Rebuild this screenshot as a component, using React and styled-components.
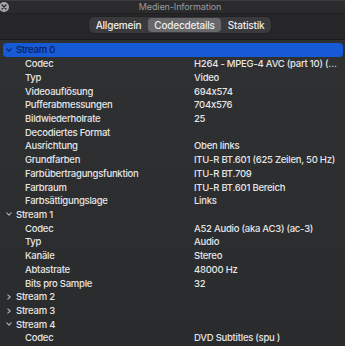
import styled, { createGlobalStyle } from 'styled-components';

const GlobalStyle = createGlobalStyle`
  html, body {
    margin: 0;
    padding: 0;
    background: #2d2e30;
  }
  body {
    font-family: Inter, "Noto Sans", sans-serif;
    font-feature-settings: "calt" 0;
    -webkit-font-smoothing: antialiased;
  }
`;

const Window = styled.div`
  width: 345px;
  height: 346px;
  overflow: hidden;
  background: linear-gradient(#303133, #2a2b2d);
  color: #e6e6e6;
`;

const TitleBar = styled.div`
  display: grid;
  grid-template-columns: 15px 1fr;
  align-items: center;
  height: 13px;
  background: #2b2b2d;
  border-top: 1px solid #3c3c3e;
  box-sizing: border-box;
`;

const CloseButton = styled.div`
  width: 10px;
  height: 10px;
  margin-left: -1px;
  border-radius: 50%;
  background: #a8a8aa;
  display: flex;
  align-items: center;
  justify-content: center;
`;

const Title = styled.div`
  text-align: center;
  font-size: 9px;
  letter-spacing: -0.1px;
  line-height: 12px;
  color: #9d9d9f;
`;

const Toolbar = styled.div`
  display: flex;
  justify-content: center;
  padding: 3px 0 6px 15px;
  background: #262628;
  border-top: 1px solid #1f1f21;
  border-bottom: 1px solid #1a1a1b;
`;

const Segmented = styled.div`
  display: flex;
  gap: 1px;
  padding: 1px;
  background: #3a3a3c;
  box-shadow: 0 0 0 0.5px #1f1f21;
  border-radius: 5px;
`;

const Segment = styled.div`
  padding: 1px 6px;
  font-size: 10px;
  line-height: 12px;
  letter-spacing: -0.2px;
  font-weight: 500;
  color: #ececec;
  border-radius: 4px;
  background: ${(p) => (p.$active ? '#68686a' : 'transparent')};
`;

const List = styled.div`
  display: flex;
  flex-direction: column;
  padding: 3px 0 0 3px;
`;

const Row = styled.div`
  display: grid;
  grid-template-columns: 191px 1fr;
  align-items: center;
  height: 13.72px;
  font-size: 9.5px;
  font-weight: 500;
  letter-spacing: -0.25px;
  white-space: nowrap;
  border-radius: 4px;
  background: ${(p) => (p.$selected ? '#165ad6' : 'transparent')};
  color: ${(p) => (p.$selected ? '#0c1d5a' : '#e6e6e6')};
  margin-right: ${(p) => (p.$selected ? '2px' : '0')};
`;

const Label = styled.div`
  display: flex;
  align-items: center;
  padding-left: ${(p) => (p.$child ? '22px' : '3px')};
  gap: 4px;
`;

const Value = styled.div`
  overflow: hidden;
`;

const Chevron = ({ open, color }) => (
  <svg width="6" height="6" viewBox="0 0 6 6" fill="none">
    {open ? (
      <path d="M0.8 1.8 L3 4.2 L5.2 1.8" stroke={color} strokeWidth="1.1" strokeLinecap="round" strokeLinejoin="round" />
    ) : (
      <path d="M1.8 0.8 L4.2 3 L1.8 5.2" stroke={color} strokeWidth="1.1" strokeLinecap="round" strokeLinejoin="round" />
    )}
  </svg>
);

const streams = [
  {
    name: 'Stream 0',
    open: true,
    selected: true,
    fields: [
      ['Codec', 'H264 - MPEG-4 AVC (part 10) (…'],
      ['Typ', 'Video'],
      ['Videoauflösung', '694x574'],
      ['Pufferabmessungen', '704x576'],
      ['Bildwiederholrate', '25'],
      ['Decodiertes Format', ''],
      ['Ausrichtung', 'Oben links'],
      ['Grundfarben', 'ITU-R BT.601 (625 Zeilen, 50 Hz)'],
      ['Farbübertragungsfunktion', 'ITU-R BT.709'],
      ['Farbraum', 'ITU-R BT.601 Bereich'],
      ['Farbsättigungslage', 'Links'],
    ],
  },
  {
    name: 'Stream 1',
    open: true,
    fields: [
      ['Codec', 'A52 Audio (aka AC3) (ac-3)'],
      ['Typ', 'Audio'],
      ['Kanäle', 'Stereo'],
      ['Abtastrate', '48000 Hz'],
      ['Bits pro Sample', '32'],
    ],
  },
  { name: 'Stream 2', open: false, fields: [] },
  { name: 'Stream 3', open: false, fields: [] },
  {
    name: 'Stream 4',
    open: true,
    fields: [['Codec', 'DVD Subtitles (spu )']],
  },
];

export default function App() {
  return (
    <>
      <GlobalStyle />
      <Window>
        <TitleBar>
          <CloseButton>
            <svg width="6" height="6" viewBox="0 0 6 6">
              <path d="M1 1 L5 5 M5 1 L1 5" stroke="#2a2a2c" strokeWidth="1.4" strokeLinecap="round" />
            </svg>
          </CloseButton>
          <Title>Medien-Information</Title>
        </TitleBar>
        <Toolbar>
          <Segmented>
            <Segment>Allgemein</Segment>
            <Segment $active>Codecdetails</Segment>
            <Segment>Statistik</Segment>
          </Segmented>
        </Toolbar>
        <List>
          {streams.map((s) => (
            <div key={s.name}>
              <Row $selected={s.selected}>
                <Label>
                  <Chevron open={s.open} color={s.selected ? '#0c1d5a' : '#b0b0b2'} />
                  {s.name}
                </Label>
                <Value />
              </Row>
              {s.fields.map(([k, v]) => (
                <Row key={k}>
                  <Label $child>{k}</Label>
                  <Value>{v}</Value>
                </Row>
              ))}
            </div>
          ))}
        </List>
      </Window>
    </>
  );
}
